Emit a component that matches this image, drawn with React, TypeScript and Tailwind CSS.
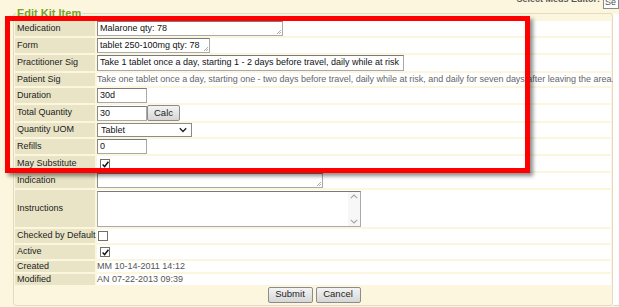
import React from 'react';

const Grip: React.FC = () => (
    <svg className="absolute right-[1px] bottom-[1px]" width="5" height="5" viewBox="0 0 5 5">
        <path d="M1 5L5 1M3 5L5 3" stroke="#9a9a9a" strokeWidth="0.8"/>
    </svg>
);

const Check: React.FC<{checked?: boolean; className?: string}> = ({checked, className}) => (
    <span className={`relative flex w-[10px] h-[10px] border border-[#707070] bg-white ${className ?? ''}`}>
        {checked && (
            <svg className="absolute left-[1px] top-[1px]" width="7" height="7" viewBox="0 0 7 7">
                <path d="M0.6 3.6L2.6 5.7L6.4 0.8" stroke="#111" strokeWidth="1.5" fill="none"/>
            </svg>
        )}
    </span>
);

const Field: React.FC<{w: string; value?: string; grip?: boolean; h?: string}> = ({w, value, grip, h}) => (
    <div
        className={`relative ${w} ${h ?? 'h-[15px]'} bg-white border border-[#a9a9a9] border-t-[#7a7a7a] border-l-[#8a8a8a] pl-[2px] text-[#111] leading-[13px] whitespace-nowrap overflow-hidden`}>
        {value}
        {grip && <Grip/>}
    </div>
);

const Btn: React.FC<{label: string; w: string}> = ({label, w}) => (
    <div
        className={`${w} h-[16px] flex items-center justify-center border border-[#8c8c8c] rounded-[2px] bg-gradient-to-b from-[#f4f4f4] to-[#d6d6d6] text-[#222] text-[9.5px]`}>
        {label}
    </div>
);

const Row: React.FC<{label: string; h: string; children?: React.ReactNode}> = ({label, h, children}) => (
    <>
        <div className={`${h} bg-[#e9e4c6] pl-[2px] flex items-center text-[#222] whitespace-nowrap`}>{label}</div>
        <div className={`${h} bg-white flex items-center`}>{children}</div>
    </>
);

const App: React.FC = () => {
    return (
        <div className="relative w-[619px] h-[307px] overflow-hidden bg-[#fbf6dd] font-['Liberation_Sans',Arial,sans-serif] text-[9px]">
            <div className="flex justify-end items-center gap-[3px] -mt-[5px] h-[12px] text-[#555] font-bold">
                <span className="-mt-[2px]">Select Meds Editor:</span>
                <div className="w-[16px] h-[14px] mt-[1px] bg-white border border-[#8a8a8a] pl-[1px] font-normal">Se</div>
            </div>

            <div className="flex">
                <fieldset className="ml-[13px] w-[600px] border border-[#e2dcbf] rounded-[3px] px-[1px] pb-[1px]">
                    <legend className="ml-[1px] px-[1px] text-[11px] leading-[13px] font-bold text-[#74a22a]">
                        Edit Kit Item
                    </legend>
                    <div className="mt-[1px] grid grid-cols-[80px_514px] gap-[2px]">
                        <Row label="Medication" h="h-[15px]">
                            <Field w="w-[186px]" value="Malarone qty: 78" grip/>
                        </Row>
                        <Row label="Form" h="h-[15px]">
                            <Field w="w-[113px]" value="tablet 250-100mg qty: 78" grip/>
                        </Row>
                        <Row label="Practitioner Sig" h="h-[16px]">
                            <Field w="w-[307px]" h="h-[16px]"
                                   value="Take 1 tablet once a day, starting 1 - 2 days before travel, daily while at risk"/>
                        </Row>
                        <Row label="Patient Sig" h="h-[13px]">
                            <span className="text-[#666] whitespace-nowrap tracking-[-0.02px]">
                                Take one tablet once a day, starting one - two days before travel, daily while at risk, and daily for seven days after leaving the area.
                            </span>
                        </Row>
                        <Row label="Duration" h="h-[15px]">
                            <Field w="w-[50px]" value="30d"/>
                        </Row>
                        <Row label="Total Quantity" h="h-[16px]">
                            <Field w="w-[50px]" value="30"/>
                            <Btn label="Calc" w="w-[33px]"/>
                        </Row>
                        <Row label="Quantity UOM" h="h-[14px]">
                            <div
                                className="relative w-[95px] h-[14px] bg-white border border-[#8a8a8a] pl-[3px] leading-[12px] text-[#111]">
                                Tablet
                                <svg className="absolute right-[4px] top-[3px]" width="8" height="6" viewBox="0 0 8 6">
                                    <path d="M0.8 1.2L4 4.4L7.2 1.2" stroke="#222" strokeWidth="1.4" fill="none"/>
                                </svg>
                            </div>
                        </Row>
                        <Row label="Refills" h="h-[15px]">
                            <Field w="w-[50px]" value="0"/>
                        </Row>
                        <Row label="May Substitute" h="h-[15px]">
                            <Check checked className="ml-[3px]"/>
                        </Row>
                        <Row label="Indication" h="h-[15px]">
                            <Field w="w-[226px]" grip/>
                        </Row>
                        <Row label="Instructions" h="h-[37px]">
                            <div className="relative w-[264px] h-[36px] bg-white border border-[#a9a9a9] border-t-[#7a7a7a]">
                                <div className="absolute right-0 top-0 bottom-0 w-[12px] bg-[#f7f7f7] flex flex-col justify-between items-center py-[2px]">
                                    <svg width="8" height="5" viewBox="0 0 8 5">
                                        <path d="M0.8 4.2L4 1L7.2 4.2" stroke="#a3a3a3" strokeWidth="1.1" fill="none"/>
                                    </svg>
                                    <svg width="8" height="5" viewBox="0 0 8 5">
                                        <path d="M0.8 0.8L4 4L7.2 0.8" stroke="#a3a3a3" strokeWidth="1.1" fill="none"/>
                                    </svg>
                                </div>
                            </div>
                        </Row>
                        <Row label="Checked by Default" h="h-[14px]">
                            <Check className="ml-[1px]"/>
                        </Row>
                        <Row label="Active" h="h-[14px]">
                            <Check checked className="ml-[3px]"/>
                        </Row>
                        <Row label="Created" h="h-[11px]">
                            <span className="text-[#555]">MM 10-14-2011 14:12</span>
                        </Row>
                        <Row label="Modified" h="h-[11px]">
                            <span className="text-[#555]">AN 07-22-2013 09:39</span>
                        </Row>
                        <div className="col-span-2 -mt-[2px] h-[19px] flex items-center justify-center gap-[3px] pl-[2px]">
                            <Btn label="Submit" w="w-[45px]"/>
                            <Btn label="Cancel" w="w-[45px]"/>
                        </div>
                    </div>
                </fieldset>
                <div className="flex-1 mt-[7px] bg-white border-b border-[#d8d8d8]"/>
            </div>

            <div
                className="absolute left-[5px] top-[16px] w-[525px] h-[157px] border-[5px] border-[#ff0000] shadow-[3px_3px_4px_rgba(0,0,0,0.45)]"/>
        </div>
    );
};

export default App;
